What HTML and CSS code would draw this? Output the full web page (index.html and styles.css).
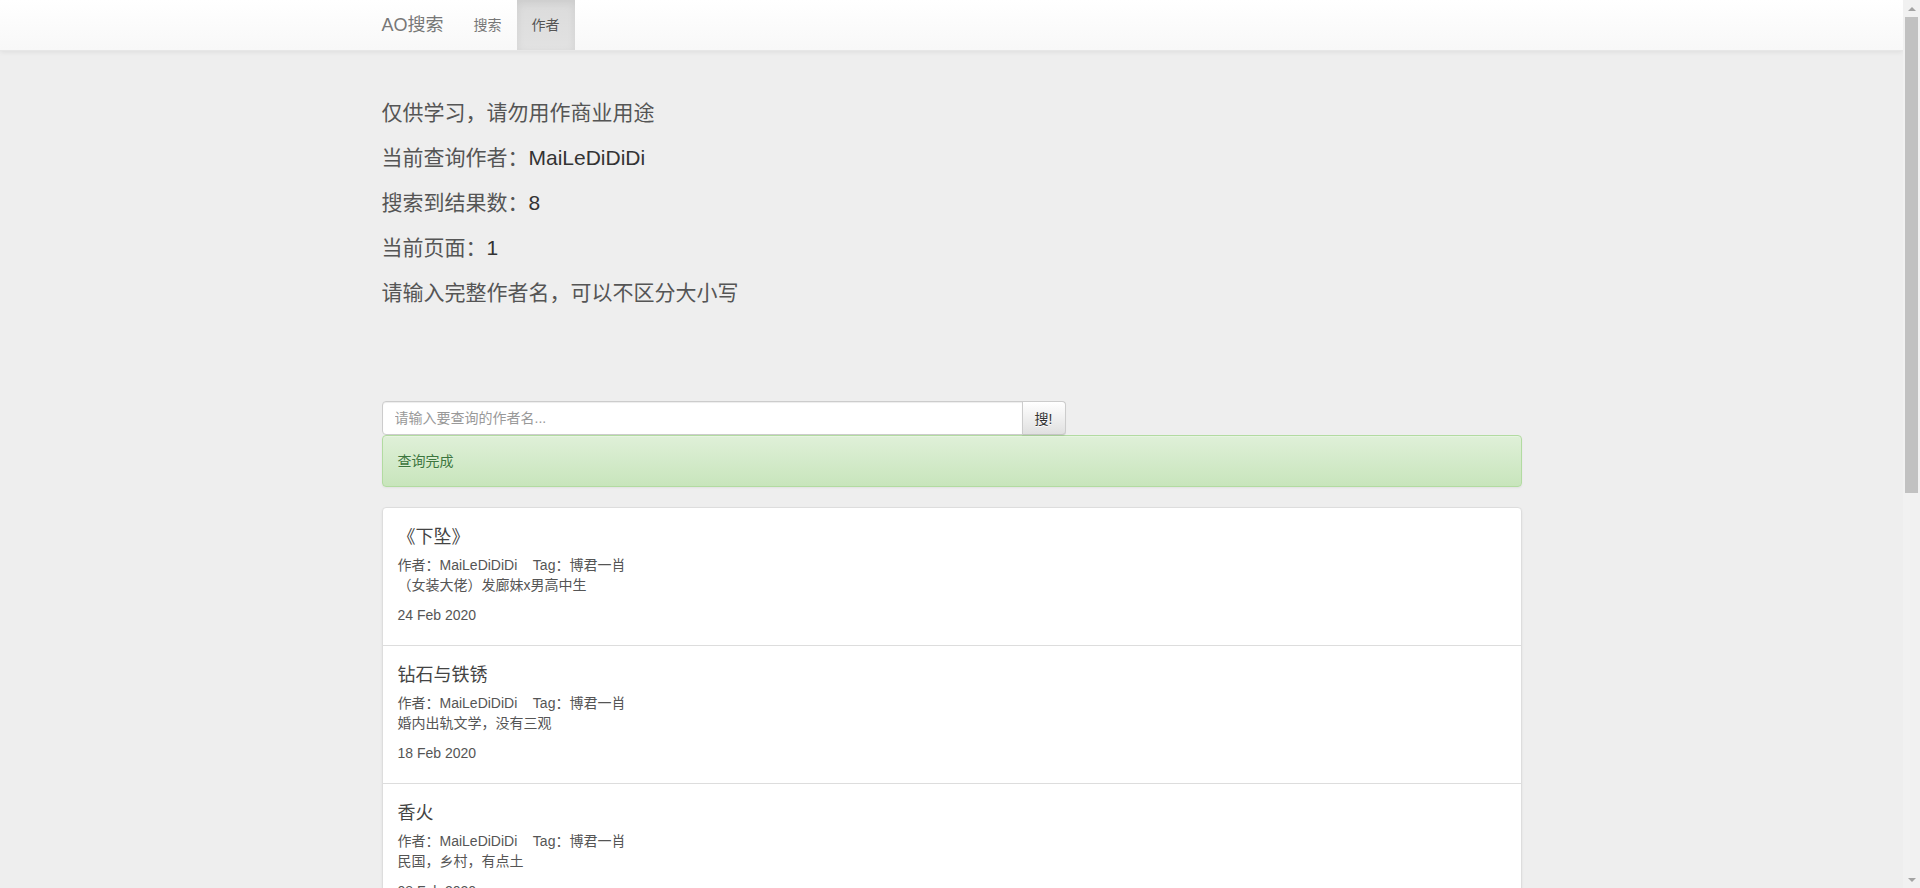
FILE: index.html
```html
<!DOCTYPE html>
<html lang="zh-CN">
<head>
<meta charset="utf-8">
<title>AO搜索</title>
<link rel="stylesheet" href="styles.css">
</head>
<body>
<div class="page">
  <nav class="navbar">
    <div class="container nav-inner">
      <a class="brand" href="#">AO搜索</a>
      <ul class="nav">
        <li><a href="#">搜索</a></li>
        <li class="active"><a href="#">作者</a></li>
      </ul>
    </div>
  </nav>

  <div class="container">
    <div class="intro">
      <p>仅供学习，请勿用作商业用途</p>
      <p>当前查询作者：<span class="val">MaiLeDiDiDi</span></p>
      <p>搜索到结果数：<span class="val">8</span></p>
      <p>当前页面：<span class="val">1</span></p>
      <p>请输入完整作者名，可以不区分大小写</p>
    </div>

    <form class="search">
      <input class="search-input" type="text" placeholder="请输入要查询的作者名...">
      <button class="search-btn" type="button">搜!</button>
    </form>

    <div class="alert">查询完成</div>

    <div class="list">
      <a class="item" href="#">
        <h4 class="item-title">《下坠》</h4>
        <p class="item-text">作者：MaiLeDiDiDi&nbsp;&nbsp;&nbsp;&nbsp;Tag：博君一肖<br>（女装大佬）发廊妹x男高中生</p>
        <p class="item-date">24 Feb 2020</p>
      </a>
      <a class="item" href="#">
        <h4 class="item-title">钻石与铁锈</h4>
        <p class="item-text">作者：MaiLeDiDiDi&nbsp;&nbsp;&nbsp;&nbsp;Tag：博君一肖<br>婚内出轨文学，没有三观</p>
        <p class="item-date">18 Feb 2020</p>
      </a>
      <a class="item" href="#">
        <h4 class="item-title">香火</h4>
        <p class="item-text">作者：MaiLeDiDiDi&nbsp;&nbsp;&nbsp;&nbsp;Tag：博君一肖<br>民国，乡村，有点土</p>
        <p class="item-date">08 Feb 2020</p>
      </a>
    </div>
  </div>
</div>

<div class="scrollbar" aria-hidden="true">
  <div class="sb-btn sb-up"></div>
  <div class="sb-track"><div class="sb-thumb"></div></div>
  <div class="sb-btn sb-down"></div>
</div>
</body>
</html>
```

FILE: styles.css
```css
html, body {
  margin: 0;
  padding: 0;
}
body {
  background: #eeeeee;
  color: #333333;
  font-family: "Liberation Sans", Arial, "Noto Sans CJK SC", sans-serif;
  font-size: 14px;
  line-height: 20px;
}
.page {
  min-height: 1594px;
  margin-right: 17px;
}
a {
  text-decoration: none;
}
.container {
  width: 1170px;
  margin: 0 auto;
  padding: 0 15px;
  box-sizing: border-box;
}

/* navbar */
.navbar {
  height: 50px;
  background-image: linear-gradient(to bottom, #ffffff 0%, #f8f8f8 100%);
  border-bottom: 1px solid #e7e7e7;
  box-shadow: inset 0 1px 0 rgba(255,255,255,.15), 0 1px 5px rgba(0,0,0,.075);
}
.nav-inner {
  display: flex;
  align-items: stretch;
  height: 50px;
}
.brand {
  margin-left: -15px;
  padding: 15px;
  font-size: 18px;
  line-height: 20px;
  color: #777777;
  text-shadow: 0 1px 0 rgba(255,255,255,.25);
}
.nav {
  display: flex;
  list-style: none;
  margin: 0;
  padding: 0;
}
.nav li a {
  display: block;
  padding: 15px;
  line-height: 20px;
  color: #777777;
  text-shadow: 0 1px 0 rgba(255,255,255,.25);
}
.nav li.active a {
  color: #555555;
  background-image: linear-gradient(to bottom, #dbdbdb 0%, #e2e2e2 100%);
  box-shadow: inset 0 3px 9px rgba(0,0,0,.075);
}

/* intro */
.intro {
  padding: 47px 0 78px;
}
.intro p {
  margin: 0 0 15px;
  font-size: 21px;
  line-height: 30px;
  color: #555555;
}
.intro .val {
  color: #333333;
}

/* search */
.search {
  display: flex;
  width: 60%;
  height: 34px;
  margin: 0;
}
.search-input {
  flex: 1;
  height: 34px;
  box-sizing: border-box;
  padding: 6px 12px;
  border: 1px solid #cccccc;
  border-radius: 4px 0 0 4px;
  background: #ffffff;
  box-shadow: inset 0 1px 1px rgba(0,0,0,.075);
  font-family: inherit;
  font-size: 14px;
  color: #555555;
  outline: none;
}
.search-input::placeholder {
  color: #999999;
}
.search-btn {
  width: 44px;
  height: 34px;
  margin-left: -1px;
  box-sizing: border-box;
  padding: 6px 12px;
  border: 1px solid #cccccc;
  border-color: #cccccc #cccccc #c4c4c4;
  border-radius: 0 4px 4px 0;
  background-image: linear-gradient(to bottom, #ffffff 0%, #e0e0e0 100%);
  box-shadow: inset 0 1px 0 rgba(255,255,255,.15), 0 1px 1px rgba(0,0,0,.075);
  text-shadow: 0 1px 0 #ffffff;
  font-family: inherit;
  font-size: 14px;
  color: #333333;
}

/* alert */
.alert {
  padding: 15px;
  margin-bottom: 20px;
  border: 1px solid #b2dba1;
  border-radius: 4px;
  background-image: linear-gradient(to bottom, #dff0d8 0%, #c8e5bc 100%);
  box-shadow: inset 0 1px 0 rgba(255,255,255,.25), 0 1px 2px rgba(0,0,0,.05);
  text-shadow: 0 1px 0 rgba(255,255,255,.2);
  color: #3c763d;
}

/* list */
.list {
  margin-bottom: 20px;
  border-radius: 4px;
  box-shadow: 0 1px 2px rgba(0,0,0,.075);
}
.item {
  display: block;
  padding: 10px 15px;
  margin-bottom: -1px;
  border: 1px solid #dddddd;
  background: #ffffff;
  color: #555555;
}
.item:first-child {
  border-top-left-radius: 4px;
  border-top-right-radius: 4px;
}
.item-title {
  margin: 9px 0 8px;
  font-size: 18px;
  font-weight: normal;
  line-height: 20px;
  color: #444444;
}
.item-text {
  margin: 0 0 10px;
  color: #555555;
}
.item-date {
  margin: 0 0 10px;
  font-size: 14px;
  color: #555555;
}

/* scrollbar drawn over the right edge */
.scrollbar {
  position: fixed;
  top: 0;
  right: 0;
  width: 17px;
  height: 100vh;
  background: #f1f1f1;
  display: flex;
  flex-direction: column;
}
.sb-btn {
  height: 17px;
  flex: none;
  display: flex;
  align-items: center;
  justify-content: center;
}
.sb-up::before {
  content: "";
  width: 0;
  height: 0;
  border-left: 4px solid transparent;
  border-right: 4px solid transparent;
  border-bottom: 4px solid #a3a3a3;
}
.sb-down::before {
  content: "";
  width: 0;
  height: 0;
  border-left: 4px solid transparent;
  border-right: 4px solid transparent;
  border-top: 4px solid #a3a3a3;
}
.sb-track {
  flex: 1;
}
.sb-thumb {
  margin: 0 2px;
  height: 476px;
  background: #c1c1c1;
}
```
